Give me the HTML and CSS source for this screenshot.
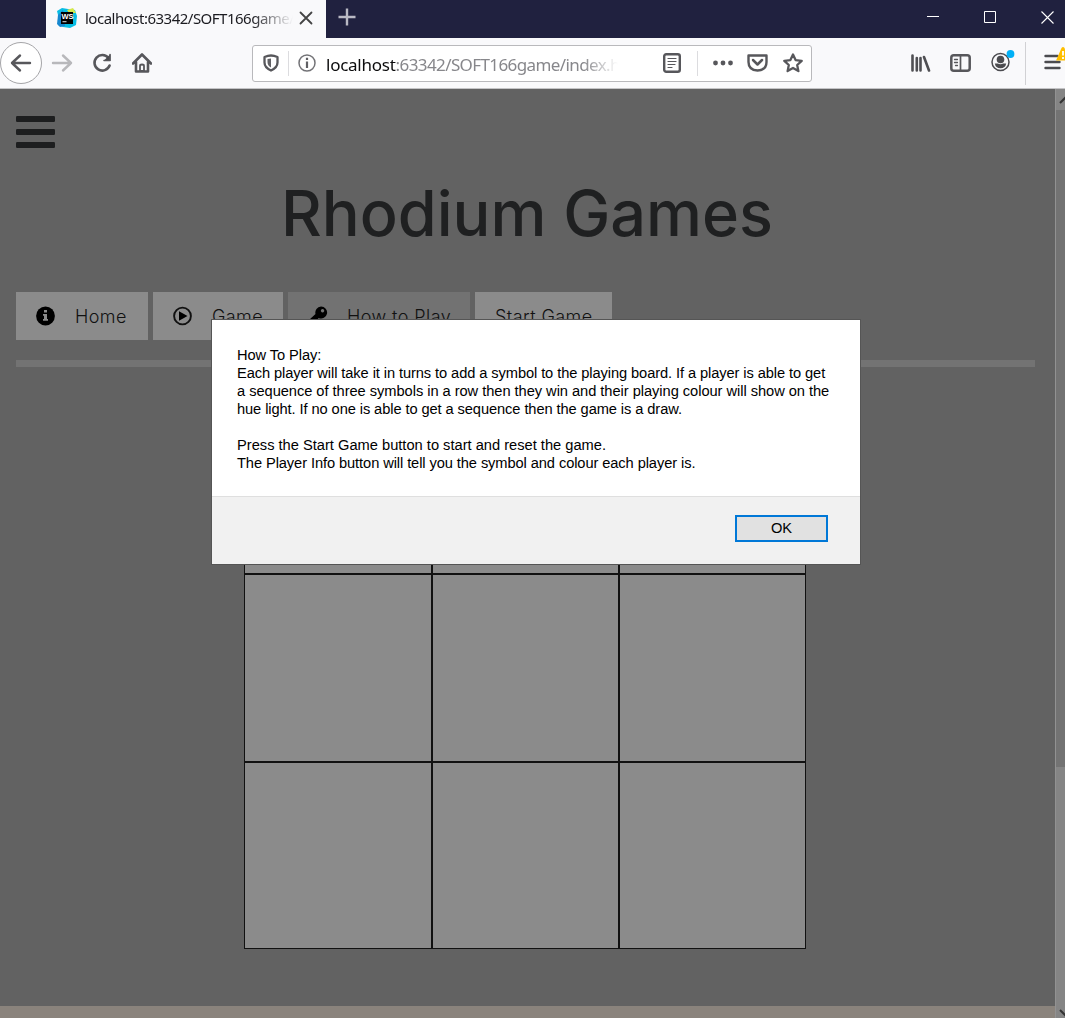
FILE: index.html
```html
<!DOCTYPE html>
<html lang="en">
<head>
<meta charset="utf-8">
<title>Rhodium Games</title>
<link rel="stylesheet" href="styles.css">
</head>
<body>
<div class="window">
  <div class="titlebar">
    <div class="tab">
      <svg class="favicon" width="20" height="20" viewBox="0 0 20 20"><path fill="#08bde4" d="M0 3 5 0l6 1 7 1 2 6-1 9-6 3-7-1-5-2 1-6z"/><path fill="#1687cf" d="M1 7l5-5 2 16-5 1-3-3z"/><path fill="#d5e84a" d="M10 2l6-2 3 5-7 0z"/><path d="M4 4h12v12H4z"/><text x="4.5" y="10.5" font-size="7.5" font-weight="700" fill="#fff">WS</text><path fill="#fff" d="M5.500 13.300h4v.9h-4z"/></svg>
      <span class="tab-title">localhost:63342/SOFT166game/</span>
      <svg class="tab-close" width="14" height="14" viewBox="0 0 14 14"><path d="M1.500 1.500l11 11M12.500 1.500l-11 11" stroke="#444" stroke-width="1.800" stroke-linecap="round"/></svg>
    </div>
    <svg class="new-tab" width="18" height="18" viewBox="0 0 18 18"><path d="M9 .5v17M.5 9h17" stroke="#b9b9c4" stroke-width="2.400"/></svg>
    <div class="controls">
      <svg width="12" height="12" viewBox="0 0 12 12"><path d="M0 5.500h12" stroke="#fff"/></svg>
      <svg width="12" height="12" viewBox="0 0 12 12"><path d="M.5.5h11v11H.5z" fill="none" stroke="#fff"/></svg>
      <svg width="13" height="13" viewBox="0 0 13 13"><path d="M.5.5l12 12M12.500.5l-12 12" stroke="#fff" stroke-width="1.100"/></svg>
    </div>
  </div>

  <div class="toolbar">
    <div class="nav">
      <span class="back"><svg class="line" width="22" height="20" viewBox="0 0 22 20"><path d="M20 10H2M10 2.500 2 10l8 7.500" stroke-width="2.400"/></svg></span>
      <svg class="line forward" width="22" height="20" viewBox="0 0 22 20"><path d="M2 10h18M12 2.500l8 7.500-8 7.500" stroke-width="2.400"/></svg>
      <svg class="line reload" width="20" height="20" viewBox="0 0 20 20"><path d="M16.500 5A7.800 7.800 0 1 0 17.600 12.500" stroke-width="2.600"/><path d="M18.500 1v7h-7z" fill="#4b4b4f" stroke="none"/><path d="M18 1.500v6h-6" stroke-width="1.500"/></svg>
      <svg class="line home" width="20" height="20" viewBox="0 0 20 20"><path d="M1 10.500 10 1.500l9 9M4 9v9.500h12V9" stroke-width="2.600"/><path d="M8 18v-5q0-1.500 2-1.500t2 1.500v5z" stroke-width="1.800"/></svg>
    </div>
    <div class="urlbar">
      <svg class="line shield" width="16" height="18" viewBox="0 0 16 18"><path d="M1.500 3Q5 1.500 8 1.500T14.500 3v5.500q0 5-6.500 8-6.500-3-6.500-8z" stroke-width="2.300"/><path d="M8 4.500v9Q4.500 11.500 4.500 8V5z" fill="#606064" stroke="none"/></svg>
      <span class="divider"></span>
      <svg class="info" width="18" height="18" viewBox="0 0 18 18"><circle cx="9" cy="9" r="8" fill="none" stroke="#737377" stroke-width="1.500"/><path fill="#606064" d="M7.900 3.800h2.200V6H7.900zM7.900 7.500h2.200V14H7.900z"/></svg>
      <span class="url"><b>localhost</b>:63342/SOFT166game/index.h</span>
      <svg class="line reader" width="18" height="20" viewBox="0 0 18 20"><rect x="1.200" y="1.200" width="15.600" height="17.600" rx="2" stroke-width="2.400"/><path d="M5 5.500h8M5 8.500h8M5 11.500h7M5 14.500h4" stroke-width="1.200"/></svg>
      <span class="divider wide"></span>
      <svg class="dots" width="20" height="6" viewBox="0 0 20 6"><circle cx="2.500" cy="3" r="2.400"/><circle cx="10" cy="3" r="2.400"/><circle cx="17.500" cy="3" r="2.400"/></svg>
      <svg class="line pocket" width="21" height="18" viewBox="0 0 21 18"><path d="M1.500 1.500h18V8q0 8-9 8.500-9-.5-9-8.500z" stroke-width="2.400"/><path d="M6 6l4.500 4.500L15 6" stroke-width="2.500"/></svg>
      <svg class="line star" width="20" height="20" viewBox="0 0 20 20"><path d="M10 1.500l2.600 5.600 6.100.700-4.500 4.200 1.200 6.100L10 15l-5.400 3.100L5.800 12 1.300 7.800l6.100-.7z" stroke-width="2.300"/></svg>
    </div>
    <div class="tools">
      <svg class="library" width="20" height="18" viewBox="0 0 20 18"><path d="M1.500 1.500v15M5.800 4v12.500M9.500 4v12.500M13 3l5 13.500" stroke="#4f4f53" stroke-width="2.600" stroke-linecap="round"/></svg>
      <svg class="line" width="21" height="18" viewBox="0 0 21 18"><rect x="1.300" y="1.300" width="18.400" height="15.400" rx="2.500" stroke-width="2.500"/><path d="M10.500 1v16" stroke-width="1.700"/><path d="M4.500 5.500h3M4.500 8.500h3M5.500 11.500h2" stroke-width="1.300"/></svg>
      <svg class="account" width="24" height="28" viewBox="0 0 24 28"><circle cx="9.500" cy="15" r="8.500" fill="none" stroke="#4b4b4f" stroke-width="1.500"/><circle cx="9.500" cy="12.500" r="3.800" fill="#4b4b4f"/><path fill="#4b4b4f" d="M3.800 16.500h3q2.700 1.500 5.400 0h3q-.8 4.800-5.700 4.800t-5.700-4.800z"/><circle cx="19.500" cy="7" r="3.900" fill="#00b0f6"/></svg>
      <span class="tools-divider"></span>
      <svg class="menu" width="22" height="28" viewBox="0 0 22 28"><path d="M1.500 9h12M1.500 15h14M1.500 21h14" stroke="#4b4b4f" stroke-width="2.400" stroke-linecap="round"/><path d="M12 13.500 17.500 1q1.500-2 3 0L26 13.500z" fill="#ffbf00"/><path d="M19 4v4.500M19 10v2" stroke="#fff" stroke-width="1.800"/></svg>
    </div>
  </div>

  <div class="viewport">
    <div class="page">
      <main class="main">
        <svg class="burger" width="39" height="32" viewBox="0 0 39 32"><rect width="39" height="6" rx="1.200"/><rect y="13" width="39" height="6" rx="1.200"/><rect y="26" width="39" height="6" rx="1.200"/></svg>
        <h1>Rhodium Games</h1>
        <nav class="buttons">
          <a class="button home-button"><svg width="20" height="20" viewBox="0 0 20 20"><circle cx="9.500" cy="10" r="9.400"/><path fill="#8b8b8b" d="M8 4h3v2.600H8zM7 8h4v5h1v1.800H7V13h1V9.700H7z"/></svg><span>Home</span></a>
          <a class="button game-button"><svg width="20" height="20" viewBox="0 0 20 20"><circle cx="9.500" cy="10" r="8.400" fill="none" stroke="#111" stroke-width="1.900"/><path d="M6 5.200 14.500 10 6 14.800z"/></svg><span>Game</span></a>
          <a class="button how-button"><svg width="20" height="20" viewBox="0 0 20 20"><path fill-rule="evenodd" d="M13 .5a6 6 0 1 1-2.300 11.500L5 18H1v-4l6.500-6A6 6 0 0 1 13 .5zM14.500 3a1.700 1.700 0 1 0 .1 0z"/></svg><span>How to Play</span></a>
          <a class="button start-button"><span>Start Game</span></a>
        </nav>
        <div class="rule"></div>
        <div class="board">
          <i></i><i></i><i></i><i></i><i></i><i></i><i></i><i></i><i></i>
        </div>
      </main>
      <footer class="page-footer"></footer>
    </div>
    <div class="scrollbar">
      <svg class="arrow" width="9" height="21" viewBox="0 0 9 21"><path d="M4 14l5-5 5 5" fill="none" stroke="#333" stroke-width="2"/></svg>
      <div class="thumb"></div>
      <svg class="arrow" width="9" height="12" viewBox="0 0 9 12"><path d="M4 4l5 5 5-5" fill="none" stroke="#333" stroke-width="2"/></svg>
    </div>
    <div class="dialog">
      <div class="dialog-text">
        <div class="tight">How To Play:</div>
        <div class="tight">Each player will take it in turns to add a symbol to the playing board. If a player is able to get</div>
        <div class="snug">a sequence of three symbols in a row then they win and their playing colour will show on the</div>
        <div class="tight">hue light. If no one is able to get a sequence then the game is a draw.</div>
        <div class="paragraph">Press the Start Game button to start and reset the game.</div>
        <div class="tight">The Player Info button will tell you the symbol and colour each player is.</div>
      </div>
      <div class="dialog-actions"><button class="ok">OK</button></div>
    </div>
  </div>
</div>
</body>
</html>
```
FILE: styles.css
```css
* { box-sizing: border-box; }
body { margin: 0; overflow: hidden; }
svg { display: block; flex: none; }
.window { width: 1065px; height: 1018px; display: flex; flex-direction: column; overflow: hidden; font-family: "Noto Sans", sans-serif; }

.titlebar { height: 38px; flex: none; display: flex; align-items: center; background: #20213f; padding-left: 46px; }
.tab { width: 280px; height: 38px; display: flex; align-items: center; background: #f9f9fb; padding: 0 13px 2px 11px; }
.favicon { font-family: "Liberation Sans", sans-serif; }
.tab-title { width: 208px; margin-left: 8px; white-space: nowrap; font-size: 15px; letter-spacing: -.5px; color: #1b1b20; -webkit-mask-image: linear-gradient(90deg, #000 80%, transparent); mask-image: linear-gradient(90deg, #000 80%, transparent); }
.tab-close { margin-left: auto; }
.new-tab { margin: -4px 0 0 12px; }
.controls { margin: -4px 11px 0 auto; display: flex; gap: 45px; align-items: center; }

.toolbar { height: 51px; flex: none; display: flex; align-items: center; background: #f9f9fb; border-bottom: 1px solid #c4c4c6; }
.line { fill: none; stroke: #57575b; stroke-linecap: round; stroke-linejoin: round; }
.nav { width: 252px; flex: none; display: flex; align-items: center; }
.back { width: 42px; height: 42px; border: 1px solid #a5a5a8; border-radius: 50%; background: #fff; display: flex; align-items: center; justify-content: center; }
.forward { margin-left: 9px; stroke: #b8b8bb; }
.reload { margin-left: 19px; }
.home { margin-left: 20px; }
.urlbar { width: 560px; height: 37px; flex: none; display: flex; align-items: center; background: #fff; border: 1px solid #b9b9bc; border-radius: 3px; padding: 0 8px 0 10px; }
.divider { width: 1px; height: 25px; background: #dcdcdf; margin: 0 9px; }
.divider.wide { margin: 0 15px 0 16px; }
.url { width: 292px; margin: 2px 0 0 10px; white-space: nowrap; font-size: 17px; letter-spacing: -.6px; color: #87878b; -webkit-mask-image: linear-gradient(90deg, #000 88%, transparent); mask-image: linear-gradient(90deg, #000 88%, transparent); }
.url b { font-weight: 400; letter-spacing: -.25px; color: #0c0c0d; }
.reader { margin-left: 45px; }
.dots { fill: #57575b; }
.pocket { margin-left: 14px; }
.star { margin-left: 15px; }
.tools { height: 50px; margin-left: 99px; display: flex; align-items: center; }
.tools .line { margin-left: 19px; }
.account { margin: -4px 0 0 20px; }
.tools-divider { width: 1px; height: 43px; background: #d1d1d4; margin: 0 18px 0 10px; }
.menu { margin-top: -4px; }

.viewport { flex: 1; min-height: 0; display: flex; position: relative; }
.page { width: 1055px; display: flex; flex-direction: column; }
.main { height: 917px; padding: 27px 20px 0 16px; background: #626262; font-family: Inter, sans-serif; color: #111; }
.burger { fill: #1d1e1f; }
h1 { height: 80px; margin: 26px 0 0; padding-left: 3px; line-height: 79px; font-size: 63px; font-weight: 500; text-align: center; color: #1f2021; }
.buttons { margin-top: 38px; display: flex; gap: 5px; }
.button { height: 48px; padding: 0 20px; display: flex; align-items: center; gap: 19px; background: #8b8b8b; font-size: 18px; font-weight: 300; letter-spacing: .42px; white-space: nowrap; }
.home-button { width: 132px; }
.game-button { width: 130px; }
.how-button { width: 182px; background: #727272; }
.start-button { width: 137px; }
.rule { height: 7px; margin-top: 20px; background: #737373; }
.board { width: 562px; height: 562px; margin: 20px 0 0 228px; display: grid; grid-template-columns: 188px 187px 187px; grid-template-rows: 187px 188px 187px; }
.board i { border: 1px solid #111; background: #8b8b8b; }
.page-footer { flex: 1; background: #8a837c; }
.scrollbar { width: 10px; display: flex; flex-direction: column; background: #858585; border-left: 1px solid #929292; }
.thumb { height: 657px; margin-bottom: auto; background: #737373; }

.dialog { position: absolute; left: 211px; top: 230px; width: 650px; height: 246px; display: flex; flex-direction: column; background: #fff; border: 1px solid #555; }
.dialog-text { height: 176px; padding: 26px 0 0 25px; font: 14.67px/18px "Liberation Sans", Arial, sans-serif; color: #000; white-space: nowrap; }
.tight { letter-spacing: -.092px; }
.snug { letter-spacing: -.045px; }
.paragraph { margin-top: 18px; }
.dialog-actions { flex: 1; display: flex; justify-content: flex-end; padding: 18px 32px 0 0; background: #f1f1f1; border-top: 1px solid #dfdfdf; }
.ok { width: 93px; height: 27px; padding: 0 0 2px; border: 2px solid #0078d7; background: #e1e1e1; font: 14.67px/18px "Liberation Sans", Arial, sans-serif; color: #000; }
```
